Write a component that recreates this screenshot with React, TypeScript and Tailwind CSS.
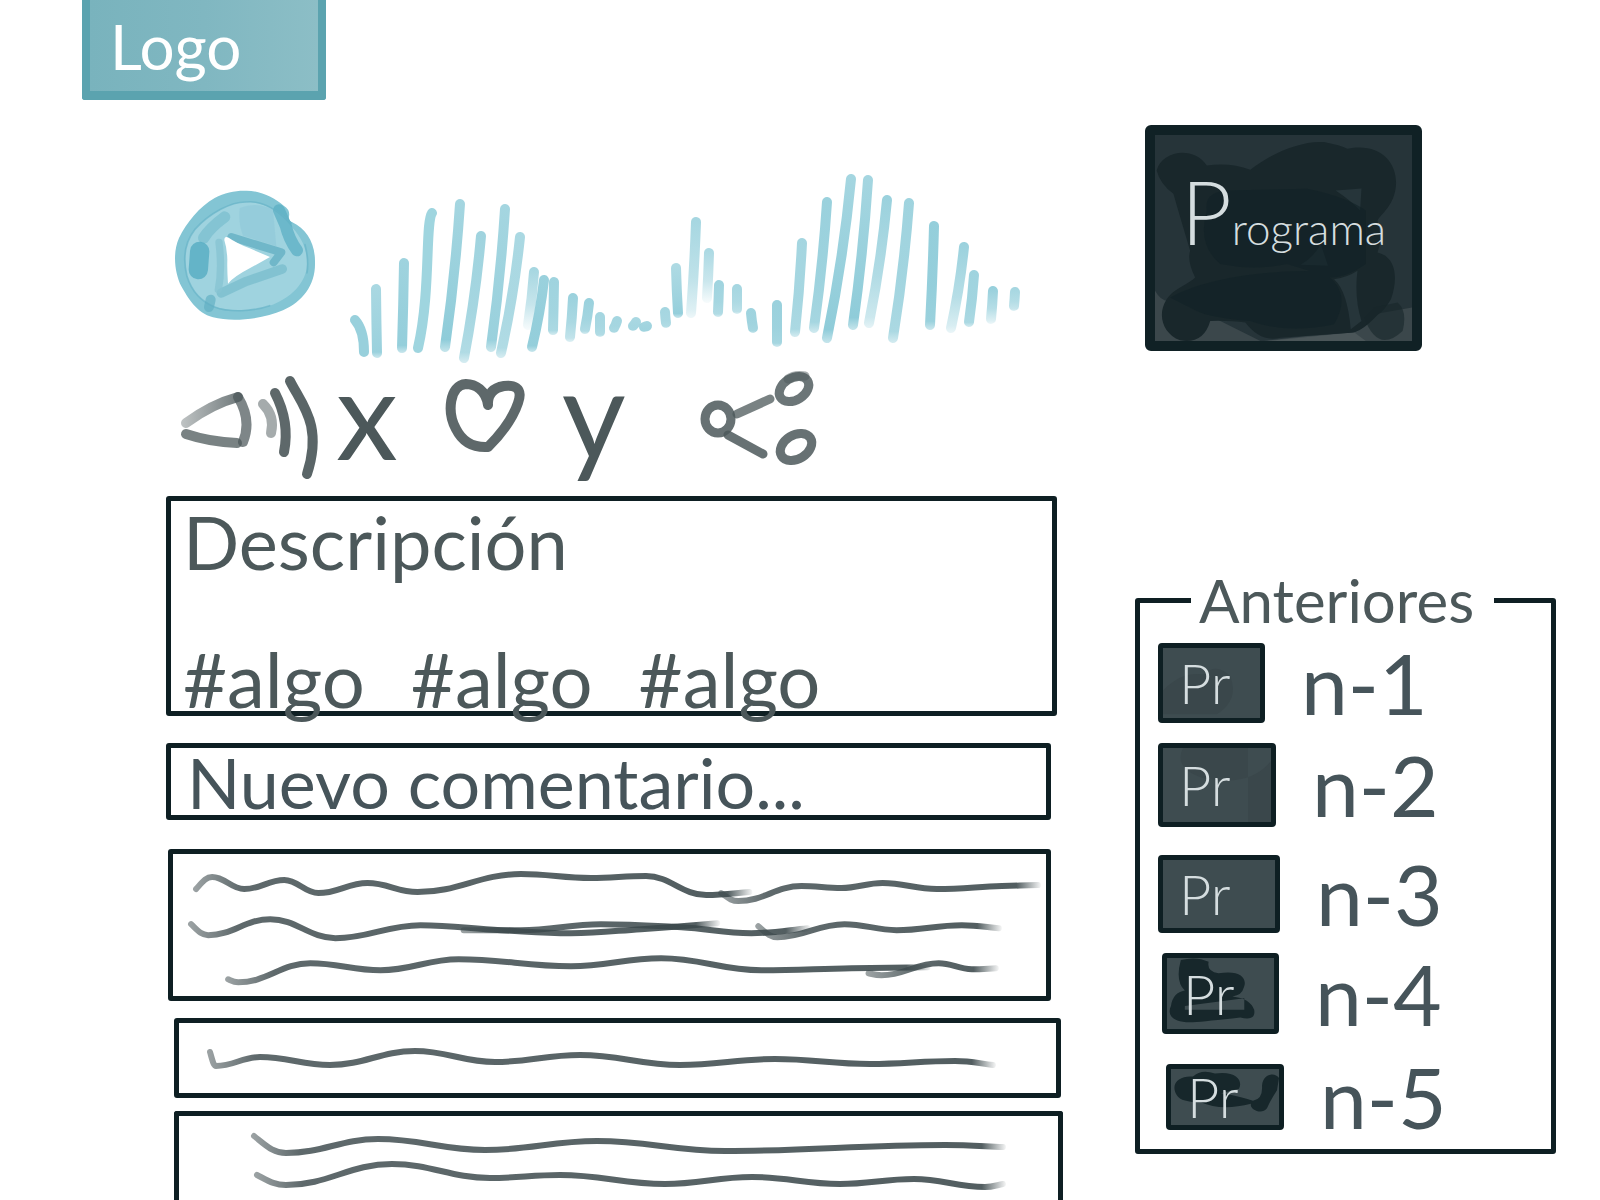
import React from "react";

const INK = "#4c585a";

type Pt = [number, number];

/** Slope at point i: flat on crests and troughs, averaged elsewhere. */
function slope(pts: Pt[], i: number): number {
  const sec = (a: Pt, b: Pt) => (b[1] - a[1]) / (b[0] - a[0]);
  if (i === 0) return sec(pts[0], pts[1]) * 1.5;
  if (i === pts.length - 1) return sec(pts[i - 1], pts[i]) * 1.2;
  const l = sec(pts[i - 1], pts[i]);
  const r = sec(pts[i], pts[i + 1]);
  return l * r <= 0 ? 0 : (2 * l * r) / (l + r);
}

/** Smooth curve through a list of points. */
function smooth(pts: Pt[]): string {
  let d = `M${pts[0][0]} ${pts[0][1]}`;
  for (let i = 0; i < pts.length - 1; i++) {
    const p1 = pts[i];
    const p2 = pts[i + 1];
    const dx = (p2[0] - p1[0]) * 0.4;
    d += `C${p1[0] + dx} ${p1[1] + slope(pts, i) * dx} ${p2[0] - dx} ${p2[1] - slope(pts, i + 1) * dx} ${p2[0]} ${p2[1]}`;
  }
  return d;
}

function Scribble({ id, viewBox, lines }: { id: string; viewBox: string; lines: Pt[][] }) {
  return (
    <svg viewBox={viewBox} className="block h-auto w-full" fill="none" aria-hidden="true">
      {lines.map((pts, i) => {
        const a = pts[0][0];
        const b = pts[pts.length - 1][0];
        const f = 24 / (b - a);
        return (
          <g key={i}>
            <linearGradient id={`${id}${i}`} gradientUnits="userSpaceOnUse" x1={a - 3} x2={b + 3} y1="0" y2="0">
              <stop offset="0" stopColor="#3b484b" stopOpacity="0.5" />
              <stop offset={f * 2} stopColor="#3b484b" stopOpacity="0.82" />
              <stop offset={1 - f} stopColor="#3b484b" stopOpacity="0.88" />
              <stop offset="1" stopColor="#3b484b" stopOpacity="0.05" />
            </linearGradient>
            <path d={smooth(pts)} stroke={`url(#${id}${i})`} strokeWidth="6" strokeLinecap="round" strokeLinejoin="round" />
          </g>
        );
      })}
    </svg>
  );
}

/* top x, top y, bottom x, bottom y, strength at the top, strength at the bottom */
const BARS: number[][] = [
  [376, 289, 377, 353, 0.8, 0.9],
  [404, 263, 402, 348, 0.9, 0.95],
  [460, 204, 445, 347, 0.85, 1],
  [481, 236, 464, 358, 0.9, 0.7],
  [505, 209, 491, 347, 0.85, 0.9],
  [520, 237, 501, 353, 0.8, 0.7],
  [534, 272, 528, 325, 0.85, 0.15],
  [544, 280, 532, 347, 0.95, 0.95],
  [554, 282, 553, 330, 0.9, 0.75],
  [573, 298, 570, 337, 0.95, 0.55],
  [589, 303, 585, 329, 0.95, 0.7],
  [600, 317, 600, 332, 0.85, 0.7],
  [617, 321, 614, 328, 0.85, 0.75],
  [636, 322, 633, 326, 0.8, 0.8],
  [647, 326, 644, 327, 0.85, 0.85],
  [665, 312, 666, 323, 0.85, 0.7],
  [676, 268, 678, 313, 0.75, 0.95],
  [696, 222, 691, 313, 0.85, 0.3],
  [709, 253, 707, 298, 0.8, 0.15],
  [719, 285, 718, 312, 0.9, 0.7],
  [737, 289, 737, 309, 0.85, 0.6],
  [751, 313, 753, 328, 0.9, 0.8],
  [777, 305, 777, 342, 0.95, 0.8],
  [802, 243, 795, 332, 0.85, 0.75],
  [827, 202, 814, 328, 0.95, 0.8],
  [851, 179, 827, 338, 0.85, 1],
  [868, 180, 853, 325, 0.85, 1],
  [887, 200, 869, 323, 0.95, 0.45],
  [909, 203, 893, 338, 0.9, 0.75],
  [934, 226, 930, 325, 1, 0.9],
  [964, 247, 951, 328, 0.95, 0.35],
  [974, 275, 969, 322, 0.9, 0.75],
  [993, 291, 991, 319, 1, 0.3],
  [1015, 292, 1014, 306, 0.85, 0.5],
];

function Waveform() {
  return (
    <svg viewBox="345 170 680 196" className="block h-auto w-full" fill="none" strokeWidth="10" strokeLinecap="round" role="img" aria-label="Forma de onda">
      {BARS.map(([x1, y1, x2, y2, a, b], i) => (
        <g key={i}>
          <linearGradient id={`bar${i}`} gradientUnits="userSpaceOnUse" x1="0" x2="0" y1={y1 - 5} y2={y2 + 5}>
            <stop offset="0" stopColor="#8fccd9" stopOpacity={a * 0.95} />
            <stop offset="0.6" stopColor="#8fccd9" stopOpacity={(a + b) / 2} />
            <stop offset="0.92" stopColor="#8fccd9" stopOpacity={b} />
            <stop offset="1" stopColor="#8fccd9" stopOpacity={b * 0.5} />
          </linearGradient>
          <path d={`M${x1} ${y1}Q${x1 - (x1 - x2) * 0.32} ${(y1 + y2) / 2} ${x2} ${y2}`} stroke={`url(#bar${i})`} />
        </g>
      ))}
      <path d="M355 320Q364 330 364 352" stroke="#98d0dc" />
      <path d="M432 213C425 223 431 292 418 348" stroke="#9fd5df" />
    </svg>
  );
}

function PlayIcon() {
  return (
    <svg viewBox="40 55 435 405" className="block h-auto w-full" fill="none" strokeLinecap="round" strokeLinejoin="round" aria-hidden="true">
      <path fill="#83c5d4" d="M258 63C300 62 345 85 372 108Q392 120 388 140Q385 152 398 158C440 178 467 220 466 278C468 345 430 395 370 422C310 448 220 458 160 443C110 430 85 385 65 350C45 310 38 250 58 205C80 160 120 110 165 85C195 68 230 62 258 63Z" />
      <path fill="#9fd3df" d="M262 97C215 97 150 130 105 180C75 215 72 270 82 320C95 365 130 400 165 412C210 425 280 425 330 408C390 388 440 340 442 285C445 235 420 195 390 165C360 130 320 98 262 97Z" />
      <path fill="#8fc8d8" d="M240 115Q235 160 250 198L350 230L340 120Q290 95 240 115Z" opacity="0.6" />
      <path stroke="#7bbfcf" strokeWidth="34" opacity="0.75" d="M195 142Q150 175 132 205" />
      <path stroke="#50a9c0" strokeWidth="58" opacity="0.75" d="M120 245L116 300" />
      <path stroke="#57adc2" strokeWidth="36" opacity="0.7" d="M358 122L378 168Q388 210 412 242" />
      <path stroke="#68b4c7" strokeWidth="5" opacity="0.7" d="M262 97C215 95 150 130 105 180C70 225 72 280 82 320C98 372 130 398 165 412C210 430 280 425 330 408M442 310Q448 270 436 225M395 160Q320 90 262 97" />
      <path stroke="#60aec1" strokeWidth="24" opacity="0.75" d="M215 202L365 248L342 278" />
      <path stroke="#78bccc" strokeWidth="28" opacity="0.75" d="M185 370L260 335L368 298" />
      <path stroke="#86c3d1" strokeWidth="22" opacity="0.75" d="M178 218Q188 300 176 360" />
      <path stroke="#60aec1" strokeWidth="30" opacity="0.65" d="M153 390L148 412" />
      <path fill="#fff" d="M194 212Q194 198 207 204Q230 220 270 236L331 262L270 296Q222 321 205 342Q202 300 203 270Q202 235 194 212Z" />
    </svg>
  );
}

function VolumeIcon() {
  return (
    <svg viewBox="178 370 146 112" className="block h-auto w-full" fill="none" stroke={INK} strokeLinecap="round" strokeWidth="10" aria-hidden="true">
      <linearGradient id="vol" gradientUnits="userSpaceOnUse" x1="180" x2="240" y1="0" y2="0">
        <stop offset="0" stopColor={INK} stopOpacity="0.35" />
        <stop offset="1" stopColor={INK} stopOpacity="0.8" />
      </linearGradient>
      <path stroke="url(#vol)" d="M238 397Q212 404 186 423" />
      <path d="M186 434Q210 442 237 443" opacity="0.75" />
      <path d="M238 397Q252 420 243 442" opacity="0.72" />
      <path d="M263 404Q275 416 271 433" opacity="0.5" />
      <path d="M275 393Q290 422 284 452" opacity="0.9" />
      <path d="M290 381C302 405 323 425 307 474" opacity="0.92" />
    </svg>
  );
}

function HeartIcon() {
  return (
    <svg viewBox="442 374 88 80" className="block h-auto w-full" fill="none" stroke={INK} strokeLinecap="round" strokeLinejoin="round" strokeWidth="10" aria-hidden="true">
      <path opacity="0.9" d="M488 405C486 390 475 384 466 384C449 385 447 413 456 429C462 441 472 448 488 447Q511 424 518 403C524 386 512 385 504 386Q487 389 488 405" />
    </svg>
  );
}

function ShareIcon() {
  return (
    <svg viewBox="696 364 128 104" className="block h-auto w-full" fill="none" stroke={INK} strokeLinecap="round" strokeWidth="9" aria-hidden="true">
      <ellipse cx="720" cy="417" rx="13" ry="14" opacity="0.85" />
      <path d="M739 412L772 397" opacity="0.75" />
      <path d="M730 433L765 452" opacity="0.85" />
      <ellipse cx="796" cy="387" rx="16" ry="11" transform="rotate(-32 796 387)" opacity="0.82" />
      <path d="M790 377Q797 372 807 374" opacity="0.5" />
      <ellipse cx="798" cy="445" rx="17" ry="12" transform="rotate(-32 798 445)" opacity="0.85" />
    </svg>
  );
}

function ProgramShade() {
  return (
    <svg viewBox="105 74 768 616" preserveAspectRatio="none" className="absolute inset-0 h-full w-full" aria-hidden="true">
      <path fill="#263439" d="M105 74H873V690H105Z" />
      <path fill="#3b474b" d="M105 540Q125 575 150 570L300 630L420 690H105ZM430 690L560 675L700 665Q740 640 760 610L873 590V690Z" />
      <path fill="#4b5659" d="M440 690L560 678L700 664L735 690Z" />
      <path fill="#19272b" d="M110 180C125 120 220 105 260 165Q330 155 390 178C450 130 540 90 610 95Q660 105 680 115C780 95 835 160 824 235C815 290 780 310 770 330Q785 390 770 425C830 440 830 510 810 565Q790 600 770 612Q720 665 690 665L480 680Q420 695 375 635Q330 628 270 630Q250 700 180 688C110 660 105 570 180 530Q215 510 225 500Q200 450 210 420Q180 320 160 250Q120 220 110 180Z" />
      <path fill="#26353a" d="M645 240L722 234L718 300Q690 270 645 240ZM540 462Q580 440 600 400L622 465ZM640 505Q680 500 710 480Q700 560 722 630L690 655Q680 540 640 505Z" />
      <path fill="#112226" d="M260 300Q250 245 320 240L560 235Q680 260 735 300L735 460Q680 500 630 500L500 460Q400 480 300 460Q230 400 260 300ZM150 560Q300 480 600 480Q700 540 640 640Q500 670 390 630Q270 620 230 600Z" opacity="0.6" />
      <path fill="#17262a" d="M730 620Q770 730 845 660Q860 600 830 575L760 590Z" opacity="0.6" />
    </svg>
  );
}

type Episode = { abbr: string; name: string; box: string; gap: string; shade?: string };

const EPISODES: Episode[] = [
  { abbr: "Pr", name: "n-1", box: "w-[107px] h-[80px]", gap: "mt-0", shade: "M0 45Q20 25 45 28Q60 15 75 30Q85 55 60 70L0 70Z" },
  { abbr: "Pr", name: "n-2", box: "w-[118px] h-[84px]", gap: "mt-5", shade: "M20 0Q10 20 40 30Q90 40 110 10L108 74H85V0Z" },
  { abbr: "Pr", name: "n-3", box: "w-[122px] h-[78px]", gap: "mt-7" },
  { abbr: "Pr", name: "n-4", box: "ml-1 w-[117px] h-[81px]", gap: "mt-5", shade: "M14 2Q30 -2 42 4Q40 14 52 16C75 12 82 22 77 32Q76 38 66 40Q84 42 88 54Q90 66 74 62Q40 66 26 67C4 68 0 58 4 50Q6 36 18 34Q8 24 14 2ZM18 50V54H78L78 42Z" },
  { abbr: "Pr", name: "n-5", box: "ml-2 w-[118px] h-[66px]", gap: "mt-[30px]", shade: "M6 35C-2 18 10 8 22 10Q30 0 44 6C66 2 72 16 68 26L50 32Q70 36 82 42Q92 40 91 22C92 6 104 4 108 12L106 28Q100 40 96 52C90 62 78 52 80 46Q50 56 30 44Q10 44 6 35Z" },
];

function EpisodeRow({ ep }: { ep: Episode }) {
  return (
    <li className={ep.gap}>
      <a href="#episodio" className="flex items-center gap-9">
        <span className={`relative flex shrink-0 items-center overflow-hidden rounded-[4px] border-[5px] border-[#0e1f23] bg-[#3e4c50] pl-4 ${ep.box}`}>
          {ep.shade && (
            <svg viewBox="0 0 108 74" preserveAspectRatio="none" className="absolute inset-0 h-full w-full" aria-hidden="true">
              <path d={ep.shade} fill={ep.name === "n-4" || ep.name === "n-5" ? "#17272b" : "#3a474b"} fillRule="evenodd" />
            </svg>
          )}
          <span className="relative text-[56px] leading-[56px] font-light text-[#d5dddf]">{ep.abbr}</span>
        </span>
        <span className="text-[84px] leading-[64px] whitespace-nowrap text-[#46545a]">{ep.name}</span>
      </a>
    </li>
  );
}

export default function App() {
  return (
    <div className="flex min-h-screen flex-col bg-white font-['Lato',sans-serif] text-[#4c585a]">
      <header className="pl-[82px]">
        <a href="#inicio" className="flex h-[100px] w-[244px] items-center rounded-b-[3px] border-x-8 border-b-[9px] border-[#5ba3af] bg-linear-to-r from-[#79b3bd] via-[#80b7c1] to-[#8cbec6] pl-5 text-[62px] leading-none text-white">
          Logo
        </a>
      </header>

      <main className="grid flex-1 grid-cols-[minmax(0,1fr)_421px] gap-x-[72px] pr-11 pl-[166px]">
        <div className="flex flex-col">
          <section className="flex items-start pt-[70px]" aria-label="Reproductor">
            <button type="button" aria-label="Reproducir" className="mt-[18px] ml-[7px] w-[145px] shrink-0">
              <PlayIcon />
            </button>
            <div className="mr-[38px] ml-[27px] min-w-0 flex-1">
              <Waveform />
            </div>
          </section>

          <section className="flex h-[130px] items-start" aria-label="Acciones">
            <button type="button" aria-label="Volumen" className="mt-1 ml-3 w-[146px] shrink-0">
              <VolumeIcon />
            </button>
            <span className="ml-3 text-[124px] leading-[92px]">x</span>
            <button type="button" aria-label="Me gusta" className="mt-2 ml-11 w-[88px] shrink-0">
              <HeartIcon />
            </button>
            <span className="ml-8 text-[124px] leading-[92px]">y</span>
            <button type="button" aria-label="Compartir" className="ml-[68px] w-32 shrink-0">
              <ShareIcon />
            </button>
          </section>

          <section className="mr-[6px] flex h-[220px] flex-col justify-between rounded-[3px] border-[5px] border-[#0e1f23] px-3 text-[76px]">
            <h1 className="text-[74px] leading-[82px]">Descripción</h1>
            <ul className="flex gap-[46px] leading-[64px]">
              <li><a href="#algo">#algo</a></li>
              <li><a href="#algo">#algo</a></li>
              <li><a href="#algo">#algo</a></li>
            </ul>
          </section>

          <input
            type="text"
            aria-label="Nuevo comentario"
            placeholder="Nuevo comentario..."
            className="mt-[27px] mr-3 h-[77px] rounded-[3px] border-[5px] border-[#0e1f23] px-4 text-[70px] leading-[67px] outline-none placeholder:text-[#46545a] placeholder:opacity-100"
          />

          <article className="mt-[29px] mr-3 ml-[2px] rounded-[3px] border-[5px] border-[#0e1f23]">
            <Scribble
              id="a"
              viewBox="173 854 871 142"
              lines={[
                [[196, 889], [212, 877], [244, 889], [284, 880], [318, 893], [367, 883], [417, 892], [520, 874], [590, 878], [645, 876], [705, 895], [748, 892]],
                [[720, 893], [737, 901], [800, 886], [840, 888], [881, 883], [935, 889], [1000, 886], [1036, 885]],
                [[191, 924], [208, 935], [270, 919], [335, 938], [420, 925], [500, 930], [570, 933], [640, 929], [716, 923]],
                [[463, 930], [520, 930], [600, 924], [680, 927], [750, 933], [806, 928]],
                [[757, 926], [776, 937], [843, 924], [895, 930], [960, 925], [997, 928]],
                [[228, 979], [238, 982], [310, 963], [380, 970], [458, 959], [570, 966], [660, 958], [760, 970], [850, 968], [926, 967]],
                [[867, 973], [880, 975], [937, 963], [970, 969], [994, 968]],
              ]}
            />
          </article>

          <article className="mt-[17px] mr-[2px] ml-2 rounded-[3px] border-[5px] border-[#0e1f23]">
            <Scribble
              id="b"
              viewBox="179 1022 877 70"
              lines={[[[210, 1051], [216, 1065], [260, 1056], [330, 1064], [415, 1050], [495, 1061], [580, 1054], [680, 1064], [775, 1058], [870, 1063], [955, 1060], [993, 1064]]]}
            />
          </article>

          <article className="mt-[13px] ml-2 flex-1 rounded-t-[3px] border-[5px] border-b-0 border-[#0e1f23]">
            <Scribble
              id="c"
              viewBox="179 1115 879 80"
              lines={[
                [[254, 1135], [286, 1152], [378, 1138], [485, 1149], [597, 1140], [725, 1150], [945, 1144], [1003, 1146]],
                [[257, 1174], [286, 1184], [392, 1163], [490, 1177], [560, 1174], [665, 1183], [752, 1176], [840, 1183], [914, 1178], [985, 1186], [1003, 1183]],
              ]}
            />
          </article>
        </div>

        <aside>
          <a href="#programa" className="relative mt-[25px] ml-[10px] flex h-[226px] w-[277px] justify-center overflow-hidden rounded-[6px] border-[10px] border-[#102125] pt-8">
            <ProgramShade />
            <span className="relative block text-[44px] leading-[88px] font-light text-[#d5dddf] first-letter:text-[88px]">Programa</span>
          </a>

          <fieldset className="mt-[213px] rounded-[3px] border-[5px] border-[#0e1f23] px-[18px] pt-[7px] pb-[19px]">
            <legend className="ml-[33px] pr-5 pl-2 text-[60px] leading-[72px]">Anteriores</legend>
            <ol>
              {EPISODES.map((ep) => (
                <EpisodeRow key={ep.name} ep={ep} />
              ))}
            </ol>
          </fieldset>
        </aside>
      </main>
    </div>
  );
}
